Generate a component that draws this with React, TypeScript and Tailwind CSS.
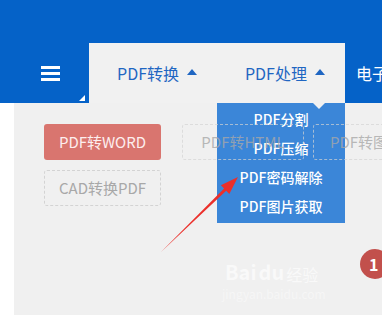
const font = { fontFamily: '"Noto Sans CJK SC", "Noto Sans", sans-serif' };

function UpTri({ className }: { className: string }) {
    return (
        <svg width="10" height="6" viewBox="0 0 10 6" className={className}>
            <polygon points="0,6 5,0 10,6" fill="currentColor" />
        </svg>
    );
}

const menuItems = ["PDF分割", "PDF压缩", "PDF密码解除", "PDF图片获取"];

export default function App() {
    return (
        <div
            className="relative w-[382px] h-[315px] overflow-hidden bg-white"
            style={font}
        >
            <div className="h-[43px] bg-[#0562c8]" />

            <div className="flex h-[60px]">
                <div className="relative w-[89px] shrink-0 bg-[#0562c8] flex items-center pl-[41px]">
                    <div className="flex flex-col gap-[3px]">
                        <span className="block w-[19px] h-[3px] bg-white" />
                        <span className="block w-[19px] h-[3px] bg-white" />
                        <span className="block w-[19px] h-[3px] bg-white" />
                    </div>
                    <svg
                        width="6"
                        height="6"
                        viewBox="0 0 6 6"
                        className="absolute right-[4px] bottom-[2px]"
                    >
                        <polygon points="6,0 6,6 0,6" fill="#ffffff" />
                    </svg>
                </div>
                <div className="flex-1 bg-[#f1f1f1] flex items-center pl-[28px] text-[16px] text-[#1f66c2]">
                    <span>PDF转换</span>
                    <UpTri className="ml-[8px] mb-[2px]" />
                    <span className="ml-[48px]">PDF处理</span>
                    <UpTri className="ml-[8px] mb-[2px]" />
                </div>
                <div className="w-[37px] shrink-0 overflow-hidden bg-[#0562c8] flex items-center pl-[11px] text-[16px] text-white whitespace-nowrap">
                    电子
                </div>
            </div>

            <div className="flex h-[212px]">
                <div className="w-[14px] shrink-0 bg-white" />
                <div className="flex-1 min-w-0 overflow-hidden bg-[#f0f0f0] pl-[30px] pt-[21px] flex flex-col gap-[10px] text-[15px]">
                    {/* the button row sits above the open menu, as on the page */}
                    <div className="relative z-20 flex">
                        <div className="w-[117px] h-[36px] shrink-0 rounded-[3px] bg-[#d9756f] text-[#fdeeee] flex items-center justify-center">
                            PDF转WORD
                        </div>
                        <div className="ml-[21px] w-[122px] h-[36px] shrink-0 rounded-[3px] border border-dashed border-[#d3d3d3]/70 text-[#a8a8a8]/80 flex items-center justify-center">
                            PDF转HTML
                        </div>
                        <div className="ml-[9px] w-[117px] h-[36px] shrink-0 rounded-[3px] border border-dashed border-[#d3d3d3]/70 text-[#a8a8a8]/80 flex items-center pl-[16px] whitespace-nowrap">
                            PDF转图片
                        </div>
                    </div>
                    <div className="w-[117px] h-[36px] rounded-[3px] border border-dashed border-[#d3d3d3] text-[#a8a8a8] flex items-center justify-center">
                        CAD转换PDF
                    </div>
                </div>
            </div>

            <div className="absolute z-10 left-[217px] top-[103px] w-[128px] h-[120px] bg-[#3b86d8] flex flex-col items-center justify-center gap-[8px] text-[14px] font-medium text-white">
                <svg
                    width="12"
                    height="6"
                    viewBox="0 0 12 6"
                    className="absolute top-0 left-[96px]"
                >
                    <polygon points="0,0 12,0 6,6" fill="#f1f1f1" />
                </svg>
                {menuItems.map((item) => (
                    <div key={item} className="leading-[21px]">
                        {item}
                    </div>
                ))}
            </div>

            <svg
                width="382"
                height="315"
                viewBox="0 0 382 315"
                className="absolute z-30 inset-0 pointer-events-none"
            >
                <polygon
                    points="161,252 226.2,190.7 229.3,193.9 238,177 220.9,185.3 224.1,188.5"
                    fill="#ec2f2a"
                />
            </svg>

            <div className="absolute z-30 left-[225px] top-[262px] flex items-end gap-[2px] text-white opacity-60 pointer-events-none">
                <span className="text-[20px] font-bold leading-none">Bai</span>
                <span className="text-[20px] font-bold leading-none">du</span>
                <span className="text-[16px] leading-none">经验</span>
            </div>
            <div className="absolute z-30 left-[222px] top-[285px] text-[12px] text-white opacity-40 pointer-events-none">
                jingyan.baidu.com
            </div>

            <div className="absolute z-30 left-[360px] top-[249px] w-[30px] h-[30px] rounded-full bg-[#c2504c] flex items-center pl-[9px] text-white text-[16px] font-bold">
                1
            </div>
        </div>
    );
}
